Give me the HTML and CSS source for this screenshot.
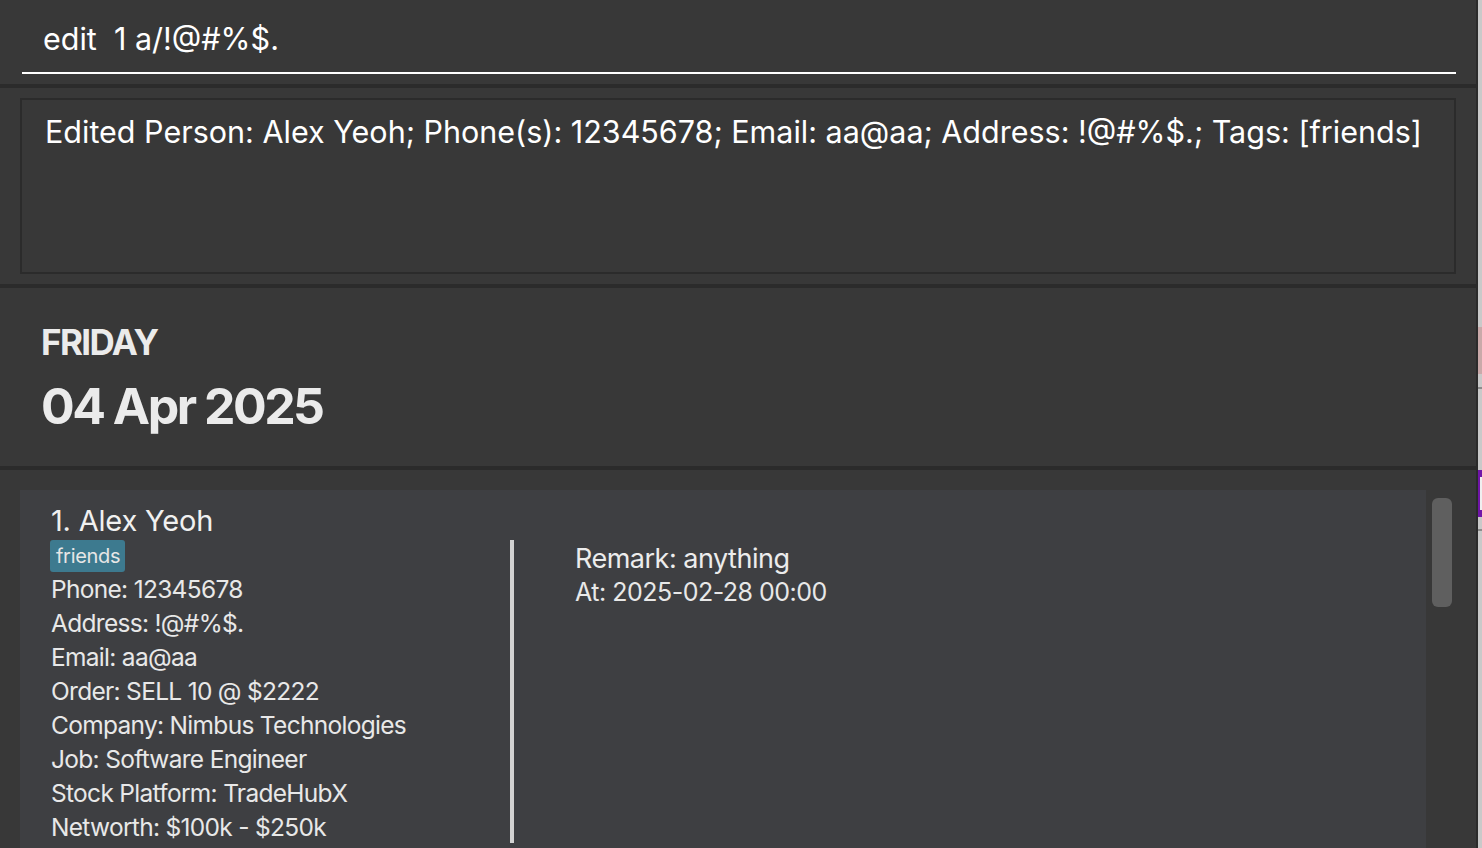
FILE: index.html
```html
<!DOCTYPE html>
<html>
<head>
<meta charset="utf-8">
<link rel="stylesheet" href="styles.css">
</head>
<body>
<div class="screen">
  <div class="window">
    <section class="command">
      <div class="command-input">edit&nbsp; 1 a/!@#%$.</div>
    </section>
    <div class="divider"></div>
    <section class="result">
      <div class="result-box">Edited Person: Alex Yeoh; Phone(s): 12345678; Email: aa@aa; Address: !@#%$.; Tags: [friends]</div>
    </section>
    <div class="divider"></div>
    <section class="date">
      <div class="day">FRIDAY</div>
      <div class="full-date">04 Apr 2025</div>
    </section>
    <div class="divider"></div>
    <section class="list">
      <div class="card">
        <div class="card-left">
          <div class="name">1. Alex Yeoh</div>
          <div class="tags"><span class="tag">friends</span></div>
          <div class="field">Phone: 12345678</div>
          <div class="field">Address: !@#%$.</div>
          <div class="field">Email: aa@aa</div>
          <div class="field">Order: SELL 10 @ $2222</div>
          <div class="field">Company: Nimbus Technologies</div>
          <div class="field">Job: Software Engineer</div>
          <div class="field">Stock Platform: TradeHubX</div>
          <div class="field">Networth: $100k - $250k</div>
        </div>
        <div class="card-rule"></div>
        <div class="card-right">
          <div class="remark">Remark: anything</div>
          <div class="remark-at">At: 2025-02-28 00:00</div>
        </div>
      </div>
      <div class="scrollbar"><div class="thumb"></div></div>
    </section>
  </div>
  <div class="behind">
    <div class="behind-top"></div>
    <div class="behind-pink"></div>
    <div class="behind-gap1"></div>
    <div class="behind-line"></div>
    <div class="behind-gap2"></div>
    <div class="behind-purple"><div class="behind-purple-in"></div></div>
    <div class="behind-gap3"></div>
    <div class="behind-line"></div>
  </div>
</div>
</body>
</html>
```

FILE: styles.css
```css
html, body {
  margin: 0;
  padding: 0;
  background: #383838;
  overflow: hidden;
}

body {
  font-family: Inter, "Noto Sans", sans-serif;
  color: #f0f0f0;
}

.screen {
  display: flex;
  width: 1482px;
  height: 848px;
}

.window {
  width: 1476px;
  height: 848px;
  border-right: 2px solid #2b2b2b;
  display: flex;
  flex-direction: column;
  background: #383838;
  overflow: hidden;
}

.divider {
  height: 4px;
  background: #2b2b2b;
  flex: none;
}

.command {
  height: 84px;
  padding: 0 20px 0 22px;
  box-sizing: border-box;
  flex: none;
}

.command-input {
  height: 74px;
  box-sizing: border-box;
  padding: 21px 0 0 21px;
  border-bottom: 2px solid #ffffff;
  font-size: 30.5px;
  line-height: 36px;
  color: #ffffff;
  letter-spacing: 0;
}

.result {
  height: 196px;
  padding: 10px 20px 10px 20px;
  box-sizing: border-box;
  flex: none;
}

.result-box {
  height: 176px;
  box-sizing: border-box;
  border: 2px solid #2b2b2b;
  padding: 14px 0 0 23px;
  font-size: 30.5px;
  line-height: 36px;
  color: #ffffff;
  letter-spacing: 0;
  white-space: nowrap;
}

.date {
  height: 178px;
  padding: 34px 0 0 41px;
  box-sizing: border-box;
  flex: none;
}

.day {
  font-weight: 700;
  font-size: 35px;
  line-height: 40px;
  letter-spacing: -1.6px;
  color: #ebebeb;
}

.full-date {
  margin-top: 16px;
  font-weight: 700;
  font-size: 50px;
  line-height: 56px;
  letter-spacing: -2.5px;
  color: #ebebeb;
}

.list {
  flex: 1;
  display: flex;
  padding: 20px 0 0 20px;
  min-height: 0;
}

.card {
  width: 1406px;
  background: #3e3f42;
  display: flex;
  padding: 0 0 0 31px;
  box-sizing: border-box;
}

.card-left {
  width: 459px;
  padding-top: 14px;
}

.name {
  font-size: 29px;
  line-height: 34px;
  letter-spacing: -0.2px;
  color: #f0f0f0;
}

.tags {
  margin-top: 2px;
  height: 32px;
}

.tag {
  display: inline-block;
  background: #3d7a8f;
  color: #e6e6e6;
  font-size: 20px;
  line-height: 32px;
  height: 32px;
  padding: 0 5px 0 6px;
  border-radius: 3px;
  margin-left: -1px;
  letter-spacing: -0.3px;
}

.field {
  font-size: 24.5px;
  line-height: 34px;
  letter-spacing: -0.7px;
  color: #e8e8e8;
}

.card-rule {
  width: 4px;
  background: #d2d2d2;
  margin-top: 50px;
  height: 303px;
  flex: none;
}

.card-right {
  padding: 52px 0 0 61px;
}

.remark {
  font-size: 27px;
  line-height: 34px;
  letter-spacing: -0.5px;
  color: #ececec;
}

.remark-at {
  font-size: 25px;
  line-height: 32px;
  letter-spacing: -0.5px;
  color: #e8e8e8;
}

.scrollbar {
  width: 50px;
  padding: 8px 0 0 6px;
  box-sizing: border-box;
}

.thumb {
  width: 20px;
  height: 109px;
  background: #5f5f5f;
  border-radius: 6px;
}

.behind {
  flex: 1;
  background: #c9c9c9;
  display: flex;
  flex-direction: column;
}

.behind-top { height: 327px; }
.behind-pink { height: 47px; background: #c9a9a9; }
.behind-gap1 { height: 13px; }
.behind-line { height: 2px; background: #8c8c8c; }
.behind-gap2 { height: 81px; }
.behind-purple { height: 47px; background: #7015a8; padding: 7px 0 7px 2px; box-sizing: border-box; }
.behind-purple-in { height: 100%; background: #f0f0f0; }
.behind-gap3 { height: 12px; }
```
